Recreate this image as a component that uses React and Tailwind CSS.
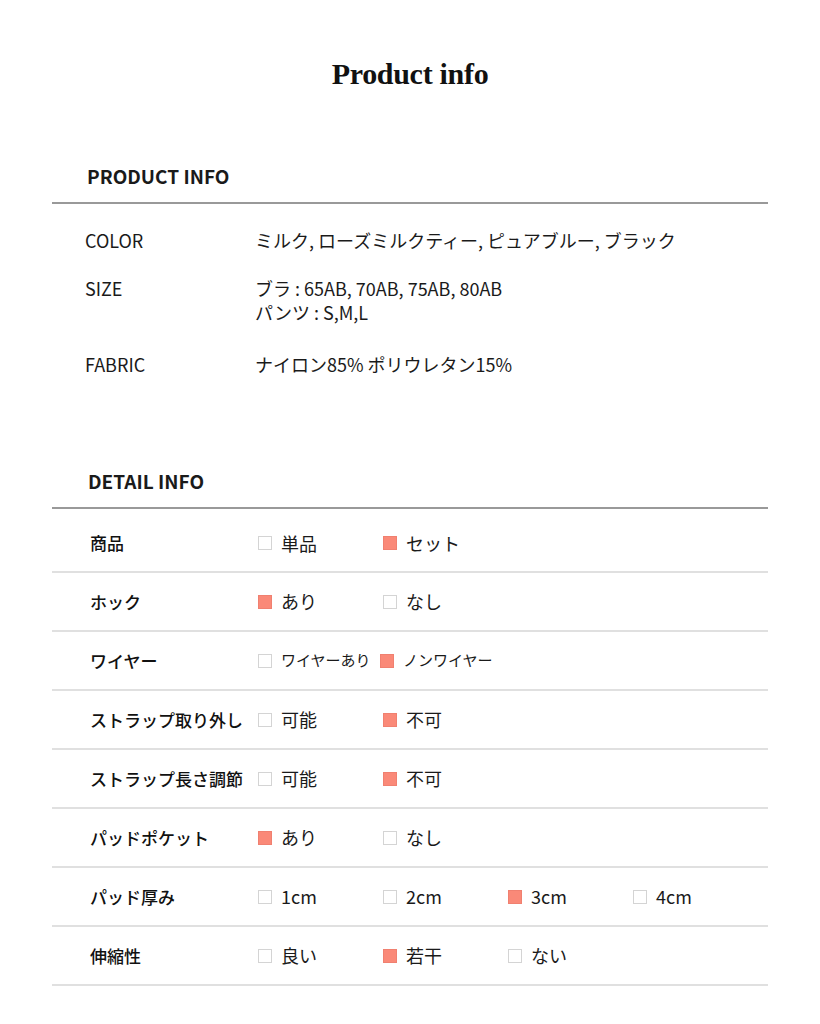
const jp = { fontFamily: '"Noto Sans CJK JP", "Noto Sans", sans-serif' };

const basics = [
  { label: "COLOR", lines: ["ミルク, ローズミルクティー, ピュアブルー, ブラック"] },
  { label: "SIZE", lines: ["ブラ : 65AB, 70AB, 75AB, 80AB", "パンツ : S,M,L"] },
  { label: "FABRIC", lines: ["ナイロン85% ポリウレタン15%"] },
];

const details = [
  { label: "商品", options: [["単品", false], ["セット", true]] },
  { label: "ホック", options: [["あり", true], ["なし", false]] },
  { label: "ワイヤー", small: true, options: [["ワイヤーあり", false], ["ノンワイヤー", true]] },
  { label: "ストラップ取り外し", options: [["可能", false], ["不可", true]] },
  { label: "ストラップ長さ調節", options: [["可能", false], ["不可", true]] },
  { label: "パッドポケット", options: [["あり", true], ["なし", false]] },
  { label: "パッド厚み", options: [["1cm", false], ["2cm", false], ["3cm", true], ["4cm", false]] },
  { label: "伸縮性", options: [["良い", false], ["若干", true], ["ない", false]] },
];

function Box({ on }) {
  return on ? (
    <span className="inline-block h-[14px] w-[14px] shrink-0 border border-[#f08070] bg-[#fa8978]" />
  ) : (
    <span className="inline-block h-[14px] w-[14px] shrink-0 border border-[#d4d4d4] bg-white" />
  );
}

export default function App() {
  return (
    <div className="min-h-[1024px] bg-white text-[#1a1a1a]" style={jp}>
      <h1
        className="pt-[55px] text-center text-[30px] font-bold leading-[38px] tracking-[-0.3px] text-[#111]"
        style={{ fontFamily: '"Liberation Serif", serif' }}
      >
        Product info
      </h1>

      <div className="mx-auto mt-[69px] w-[716px]">
        {/* product info */}
        <div className="border-b-2 border-[#999] pb-[12px] pl-[35px] text-[19px] font-bold leading-[28px]">
          PRODUCT INFO
        </div>
        <div className="flex flex-col gap-[24px] pl-[33px] pt-[24px] text-[18px] leading-[24px]">
          {basics.map((b) => (
            <div key={b.label} className={`flex ${b.label === "FABRIC" ? "mt-[4px]" : ""}`}>
              <div className="w-[170px]">{b.label}</div>
              <div>
                {b.lines.map((l) => (
                  <div key={l}>{l}</div>
                ))}
              </div>
            </div>
          ))}
        </div>

        {/* detail info */}
        <div className="mt-[91px] border-b-2 border-[#999] pb-[12px] pl-[36px] text-[19px] font-bold leading-[28px]">
          DETAIL INFO
        </div>
        {details.map((d, i) => (
          <div
            key={d.label}
            className={`flex items-center border-b-2 border-[#e0e0e0] pl-[38px] ${i === 0 ? "h-[64px] pt-[6px]" : "h-[59px]"}`}
          >
            <div className="w-[168px] text-[17px] font-medium text-[#111]">{d.label}</div>
            {d.options.map(([text, on], j) => (
              <div
                key={text}
                className={`flex items-center ${d.small ? (j === 0 ? "w-[122px]" : "") : "w-[125px]"}`}
              >
                <Box on={on} />
                <span className={`ml-[9px] ${d.small ? "text-[15px]" : "text-[18px]"}`}>{text}</span>
              </div>
            ))}
          </div>
        ))}
      </div>
    </div>
  );
}
